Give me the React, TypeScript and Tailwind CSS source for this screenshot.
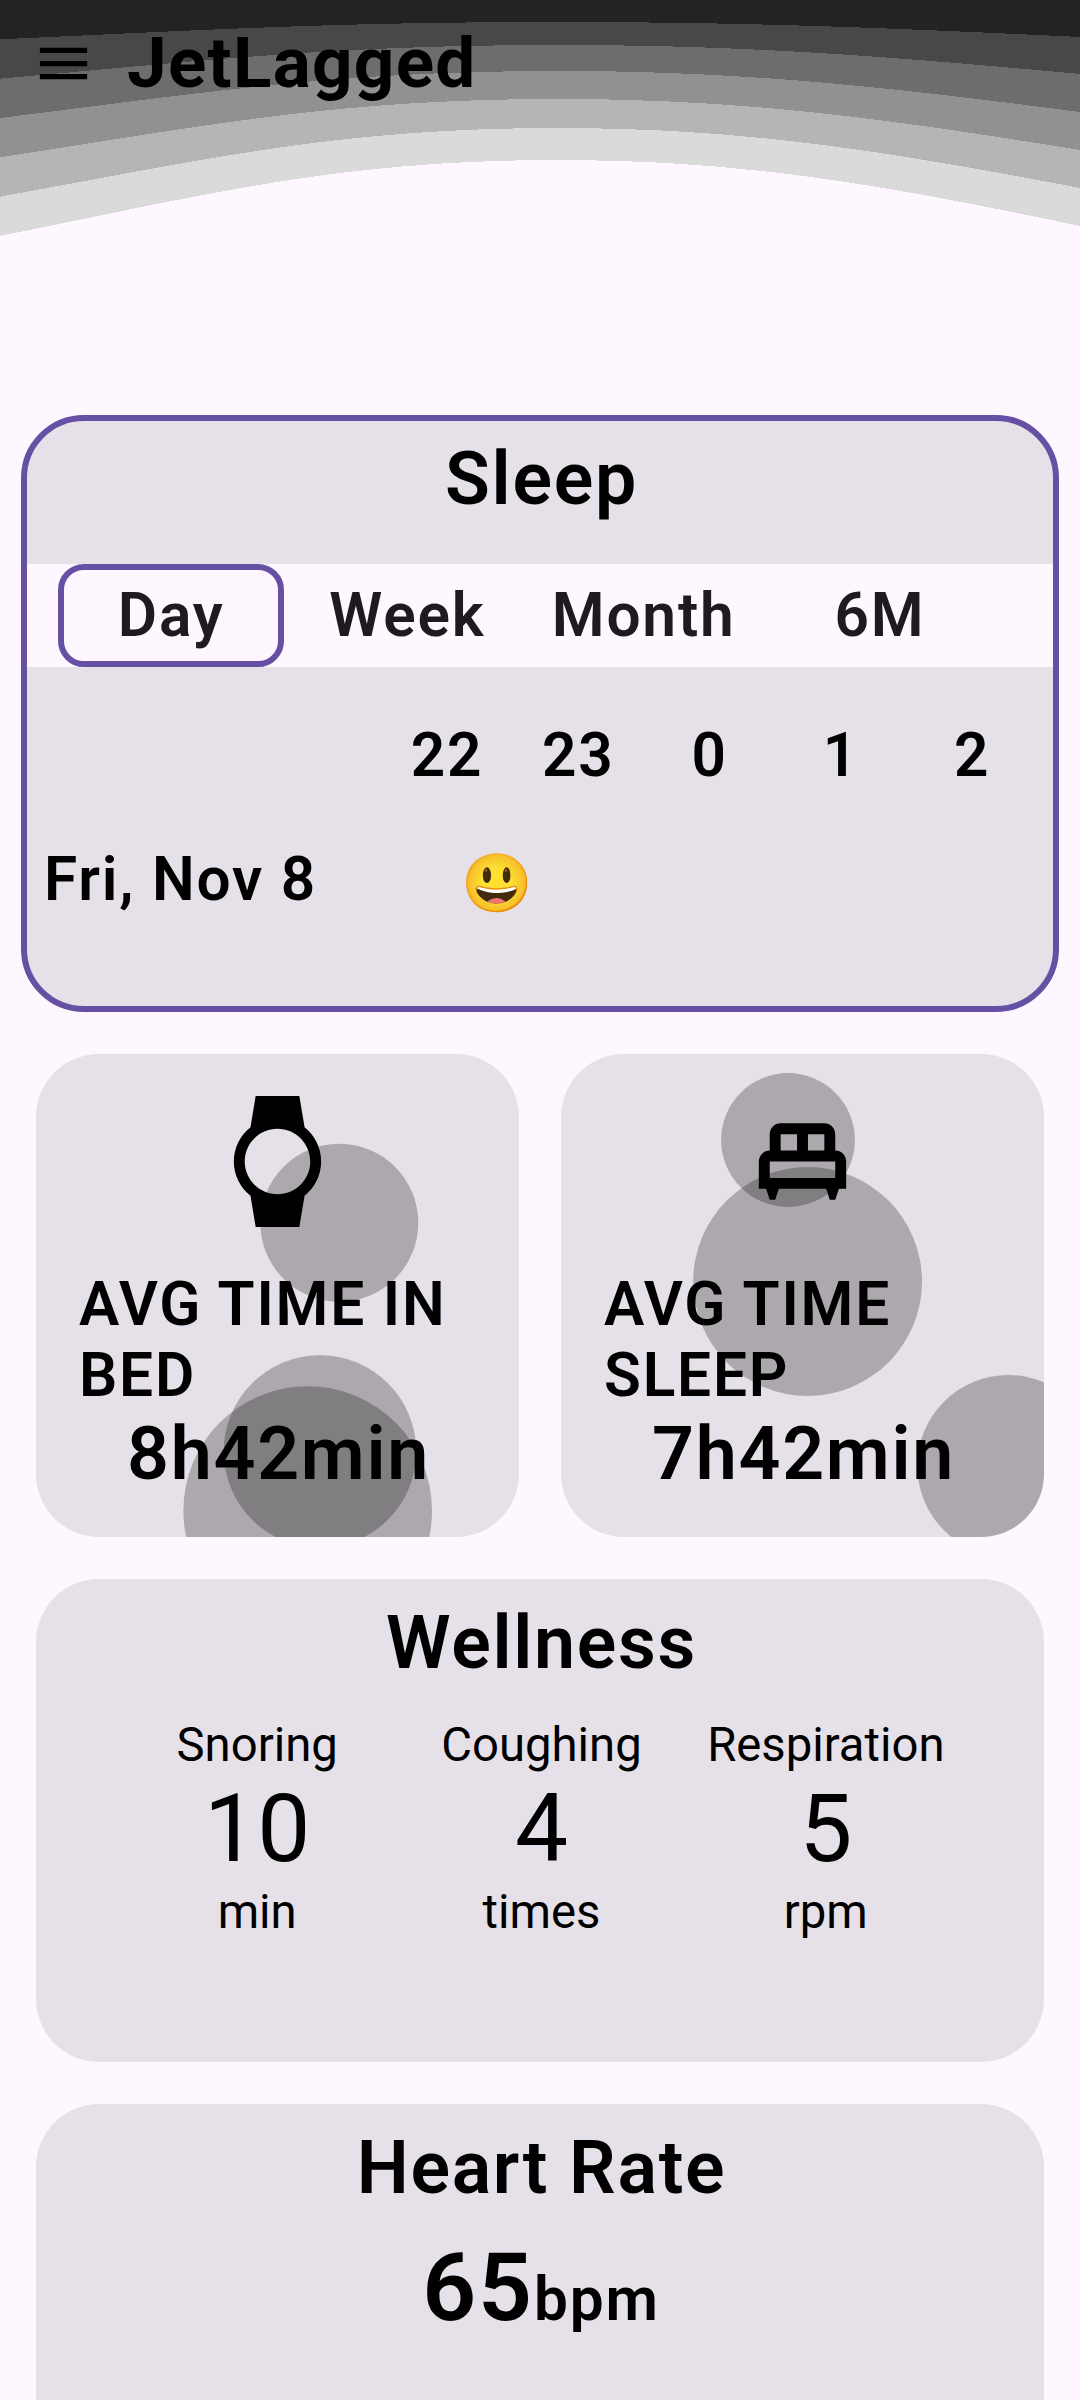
import React from 'react';

type Circle = { cx: number; cy: number; r: number };

const bands = [
  { fill: '#dadada', left: 236, mid: 160, right: 226 },
  { fill: '#b5b5b5', left: 196.7, mid: 128, right: 188 },
  { fill: '#919191', left: 157.3, mid: 99, right: 150 },
  { fill: '#6d6d6d', left: 118, mid: 71, right: 112 },
  { fill: '#484848', left: 78.7, mid: 45, right: 74 },
  { fill: '#232323', left: 39.3, mid: 22, right: 37 },
];

function bandPath(left: number, mid: number, right: number) {
  const leftHandle = mid + 0.447 * (left - mid);
  const rightHandle = mid + 0.364 * (right - mid);
  return `M0 0V${left}C210 ${leftHandle} 338 ${mid} 560 ${mid}C740 ${mid} 880 ${rightHandle} 1080 ${right}V0Z`;
}

function HeaderWaves() {
  return (
    <svg className="absolute left-0 top-0" width="1080" height="240" viewBox="0 0 1080 240" shapeRendering="crispEdges">
      {bands.map((b) => (
        <path key={b.fill} d={bandPath(b.left, b.mid, b.right)} fill={b.fill} />
      ))}
    </svg>
  );
}

function Header() {
  return (
    <header className="relative h-[415px]">
      <HeaderWaves />
      <div className="relative flex h-[126px] items-center gap-[32px] pl-8">
        <svg className="size-[63px]" viewBox="0 0 24 24">
          <path d="M3 18h18v-2H3v2zm0-5h18v-2H3v2zm0-7v2h18V6H3z" />
        </svg>
        <h1 className="text-[71px] font-bold leading-[126px] tracking-[1.3px]">JetLagged</h1>
      </div>
    </header>
  );
}

function CardTitle({ children }: { children: string }) {
  return <h2 className="pl-[3px] text-center text-[73.5px] font-semibold leading-[86px] tracking-[1.7px]">{children}</h2>;
}

function Tab({ label, active }: { label: string; active?: boolean }) {
  return (
    <div className="w-[236.25px] px-[5px]">
      <div
        className={
          active
            ? 'flex h-[103px] items-center justify-center rounded-[26px] border-[6px] border-[#6650a4]'
            : 'flex h-[103px] items-center justify-center'
        }
      >
        {label}
      </div>
    </div>
  );
}

function SleepCard() {
  return (
    <section className="mx-[21px] h-[597px] overflow-hidden rounded-[63px] border-[6px] border-[#6650a4] bg-[#e6e0e9] text-[60.375px] font-semibold tracking-[1.8px]">
      <div className="pt-[15px]">
        <CardTitle>Sleep</CardTitle>
      </div>
      <div className="mt-[42px] flex bg-[#fef7ff] pl-[26px] leading-[91px] text-[#1d1b20]">
        <Tab label="Day" active />
        <Tab label="Week" />
        <Tab label="Month" />
        <Tab label="6M" />
      </div>
      <div className="flex pl-[354.5px] leading-[177px]">
        {['22', '23', '0', '1', '2'].map((hour) => (
          <div key={hour} className="w-[131.25px] text-center">
            {hour}
          </div>
        ))}
      </div>
      <div className="flex pl-[17px] leading-[71px]">
        <div className="w-[417px] whitespace-nowrap">Fri, Nov 8</div>
        <div className="pt-1 text-[57.5px] tracking-normal">😃</div>
      </div>
    </section>
  );
}

function StatCard({ circles, icon, label, value }: { circles: Circle[]; icon: string; label: string; value: string }) {
  return (
    <section className="relative size-[483px] overflow-hidden rounded-[63px] bg-[#e6e0e9] pt-[42px]">
      <svg className="absolute left-0 top-0" width="483" height="483" viewBox="0 0 483 483" fill="#000" fillOpacity="0.25">
        {circles.map((c) => (
          <circle key={c.cx} cx={c.cx} cy={c.cy} r={c.r} />
        ))}
      </svg>
      <div className="relative flex flex-col">
        <svg className="size-[131px] self-center" viewBox="0 0 24 24">
          <path d={icon} />
        </svg>
        <div className="mt-[42px] px-[43px] text-[60.375px] font-semibold leading-[71px] tracking-[1.8px]">{label}</div>
        <div className="pl-[2px] text-center text-[73.5px] font-semibold leading-[86px] tracking-[1.7px]">{value}</div>
      </div>
    </section>
  );
}

const watch =
  'M20 12c0-2.54-1.19-4.81-3.04-6.27L16 0H8l-.95 5.73C5.19 7.19 4 9.45 4 12s1.19 4.81 3.05 6.27L8 24h8l.96-5.73C18.81 16.81 20 14.54 20 12zM6 12c0-3.31 2.69-6 6-6s6 2.69 6 6-2.69 6-6 6-6-2.69-6-6z';
const bed =
  'M20 12c0-1.1-.9-2-2-2V7c0-1.1-.9-2-2-2H8c-1.1 0-2 .9-2 2v3c-1.1 0-2 .9-2 2v5h1.33L6 19h1l.67-2h8.67l.66 2h1l.67-2H20v-5zm-4-2h-3V7h3v3zM8 7h3v3H8V7zm-2 5h12v3H6v-3z';

const wellness = [
  { label: 'Snoring', value: '10', unit: 'min' },
  { label: 'Coughing', value: '4', unit: 'times' },
  { label: 'Respiration', value: '5', unit: 'rpm' },
];

export default function App() {
  return (
    <main className="h-[2400px] w-[1080px] overflow-hidden bg-[#fef7ff] font-['Roboto',sans-serif] text-black">
      <Header />
      <SleepCard />
      <div className="mt-[42px] flex flex-col gap-[42px] px-9">
        <div className="flex gap-[42px]">
          <StatCard
            icon={watch}
            label="AVG TIME IN BED"
            value="8h42min"
            circles={[
              { cx: 303.3, cy: 168.8, r: 79 },
              { cx: 284, cy: 397.5, r: 96.3 },
              { cx: 271.7, cy: 456.5, r: 124.3 },
            ]}
          />
          <StatCard
            icon={bed}
            label="AVG TIME SLEEP"
            value="7h42min"
            circles={[
              { cx: 227, cy: 86, r: 66.9 },
              { cx: 246.6, cy: 227.5, r: 114.4 },
              { cx: 447.3, cy: 412, r: 91 },
            ]}
          />
        </div>
        <section className="h-[483px] rounded-[63px] bg-[#e6e0e9] pt-[21px]">
          <CardTitle>Wellness</CardTitle>
          <div className="mt-[31px] grid grid-cols-3 pl-[79px] pr-[76px] text-center text-[47.25px] leading-[56px]">
            {wellness.map((item) => (
              <div key={item.label}>
                <div>{item.label}</div>
                <div className="text-[94.5px] leading-[111px]">{item.value}</div>
                <div>{item.unit}</div>
              </div>
            ))}
          </div>
        </section>
        <section className="h-[483px] rounded-[63px] bg-[#e6e0e9] pt-[21px]">
          <CardTitle>Heart Rate</CardTitle>
          <div className="mt-[21px] flex items-baseline justify-center pl-[2px] font-semibold tracking-[1.8px]">
            <span className="text-[94.5px] leading-[111px]">65</span>
            <span className="text-[60.375px] leading-[71px]">bpm</span>
          </div>
        </section>
      </div>
    </main>
  );
}
